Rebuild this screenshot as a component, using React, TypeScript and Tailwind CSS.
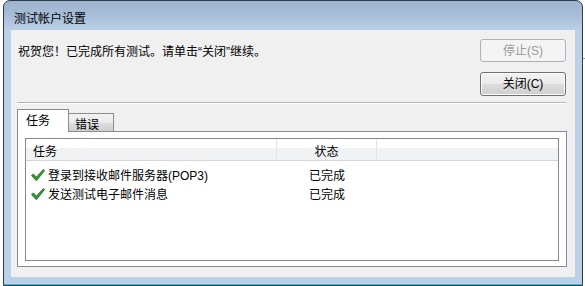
import React from 'react';

const font = { fontFamily: '"Liberation Sans", "Noto Sans CJK SC", sans-serif' };

function Check() {
  return (
    <svg width="14" height="13" viewBox="0 0 14 13" className="shrink-0">
      <path d="M0.5 6.5 L2.5 5 L5.3 8.2 L12.3 0.6 L13.6 1.6 L5.4 11.8 Z" fill="#2f9a2f" stroke="#1c6b1c" strokeWidth="0.8" strokeLinejoin="round" />
    </svg>
  );
}

export default function App() {
  const rows = ['登录到接收邮件服务器(POP3)', '发送测试电子邮件消息'];

  return (
    <div className="w-[585px] h-[286px] bg-white relative overflow-hidden text-black" style={font}>
      {/* window */}
      <div className="ml-[3px] w-[580px] h-[286px] border border-[#2e3b4a] rounded-t-[7px] flex flex-col bg-[linear-gradient(180deg,#9cb2cd_0px,#a9bfd9_15px,#bbd1ea_30px,#bbd1ea_100%)]">
        <div className="h-[29px] shrink-0 pl-[10px] pt-[10px] text-[12px] leading-[16px]">测试帐户设置</div>

        <div className="flex-1 flex px-[7px]">
          <div className="flex-1 bg-[#f0f0f0] pl-[6px] pr-[8px] pt-[9px] flex flex-col">
            <div className="flex justify-between">
              <p className="pl-[1px] pt-[5px] text-[12px] leading-[16px]">祝贺您！已完成所有测试。请单击“关闭”继续。</p>
              <div className="flex flex-col gap-[10px] mr-[1px]">
                <button className="w-[86px] h-[23px] rounded-[3px] border border-[#adb2b5] bg-[#f4f4f4] text-[12px] text-[#9a9a9a]">
                  停止(S)
                </button>
                <button className="w-[86px] h-[24px] rounded-[3px] border border-[#707070] bg-[linear-gradient(180deg,#f2f2f2_0%,#ebebeb_50%,#dddddd_50%,#cfcfcf_100%)] shadow-[inset_0_0_0_1px_#fcfcfc] text-[12px]">
                  关闭(C)
                </button>
              </div>
            </div>

            <div className="mt-[6px] mr-[1px] h-[1px] bg-[#b4b4b4] border-b border-white box-content" />

            {/* tabs */}
            <div className="mt-[5px] flex items-end h-[22px] relative z-10">
              <div className="w-[52px] h-[23px] -mb-[1px] border border-b-0 border-[#898c95] bg-white text-[12px] leading-[16px] pl-[8px] pt-[3px]">任务</div>
              <div className="w-[46px] h-[18px] -ml-[1px] border border-b-0 border-[#898c95] bg-[linear-gradient(180deg,#f2f2f2_0%,#ebebeb_50%,#dddddd_50%,#cfcfcf_100%)] text-[12px] leading-[16px] pl-[6px] pt-[3px]">错误</div>
            </div>

            <div className="w-[550px] h-[136px] border border-[#898c95] bg-white px-[7px] pt-[6px] pb-[5px] flex">
              <div className="flex-1 border border-[#828790] bg-white flex flex-col">
                <div className="h-[22px] shrink-0 flex border-b border-[#d5d5d5] bg-[linear-gradient(180deg,#ffffff_0%,#ffffff_45%,#f1f2f4_45%,#f1f2f4_100%)] text-[12px] leading-[16px]">
                  <div className="w-[251px] pl-[7px] pt-[5px] border-r border-[#e3e4e6]">任务</div>
                  <div className="w-[100px] text-center pt-[5px] border-r border-[#e3e4e6]">状态</div>
                  <div className="flex-1" />
                </div>
                <div className="pt-[5px] flex flex-col">
                  {rows.map((r) => (
                    <div key={r} className="h-[19px] flex items-center text-[12px] leading-[16px]">
                      <div className="w-[251px] flex items-center pl-[5px] gap-[3px]">
                        <Check />
                        <span>{r}</span>
                      </div>
                      <div className="w-[100px] text-center">已完成</div>
                    </div>
                  ))}
                </div>
              </div>
            </div>
          </div>
        </div>

        <div className="h-[7px] shrink-0" />
        <div className="h-[1px] shrink-0 bg-[#2fc3d8]" />
      </div>
      <div className="absolute right-0 top-[58px] w-[2px] h-[1px] bg-[#9a9a9a]" />
    </div>
  );
}
